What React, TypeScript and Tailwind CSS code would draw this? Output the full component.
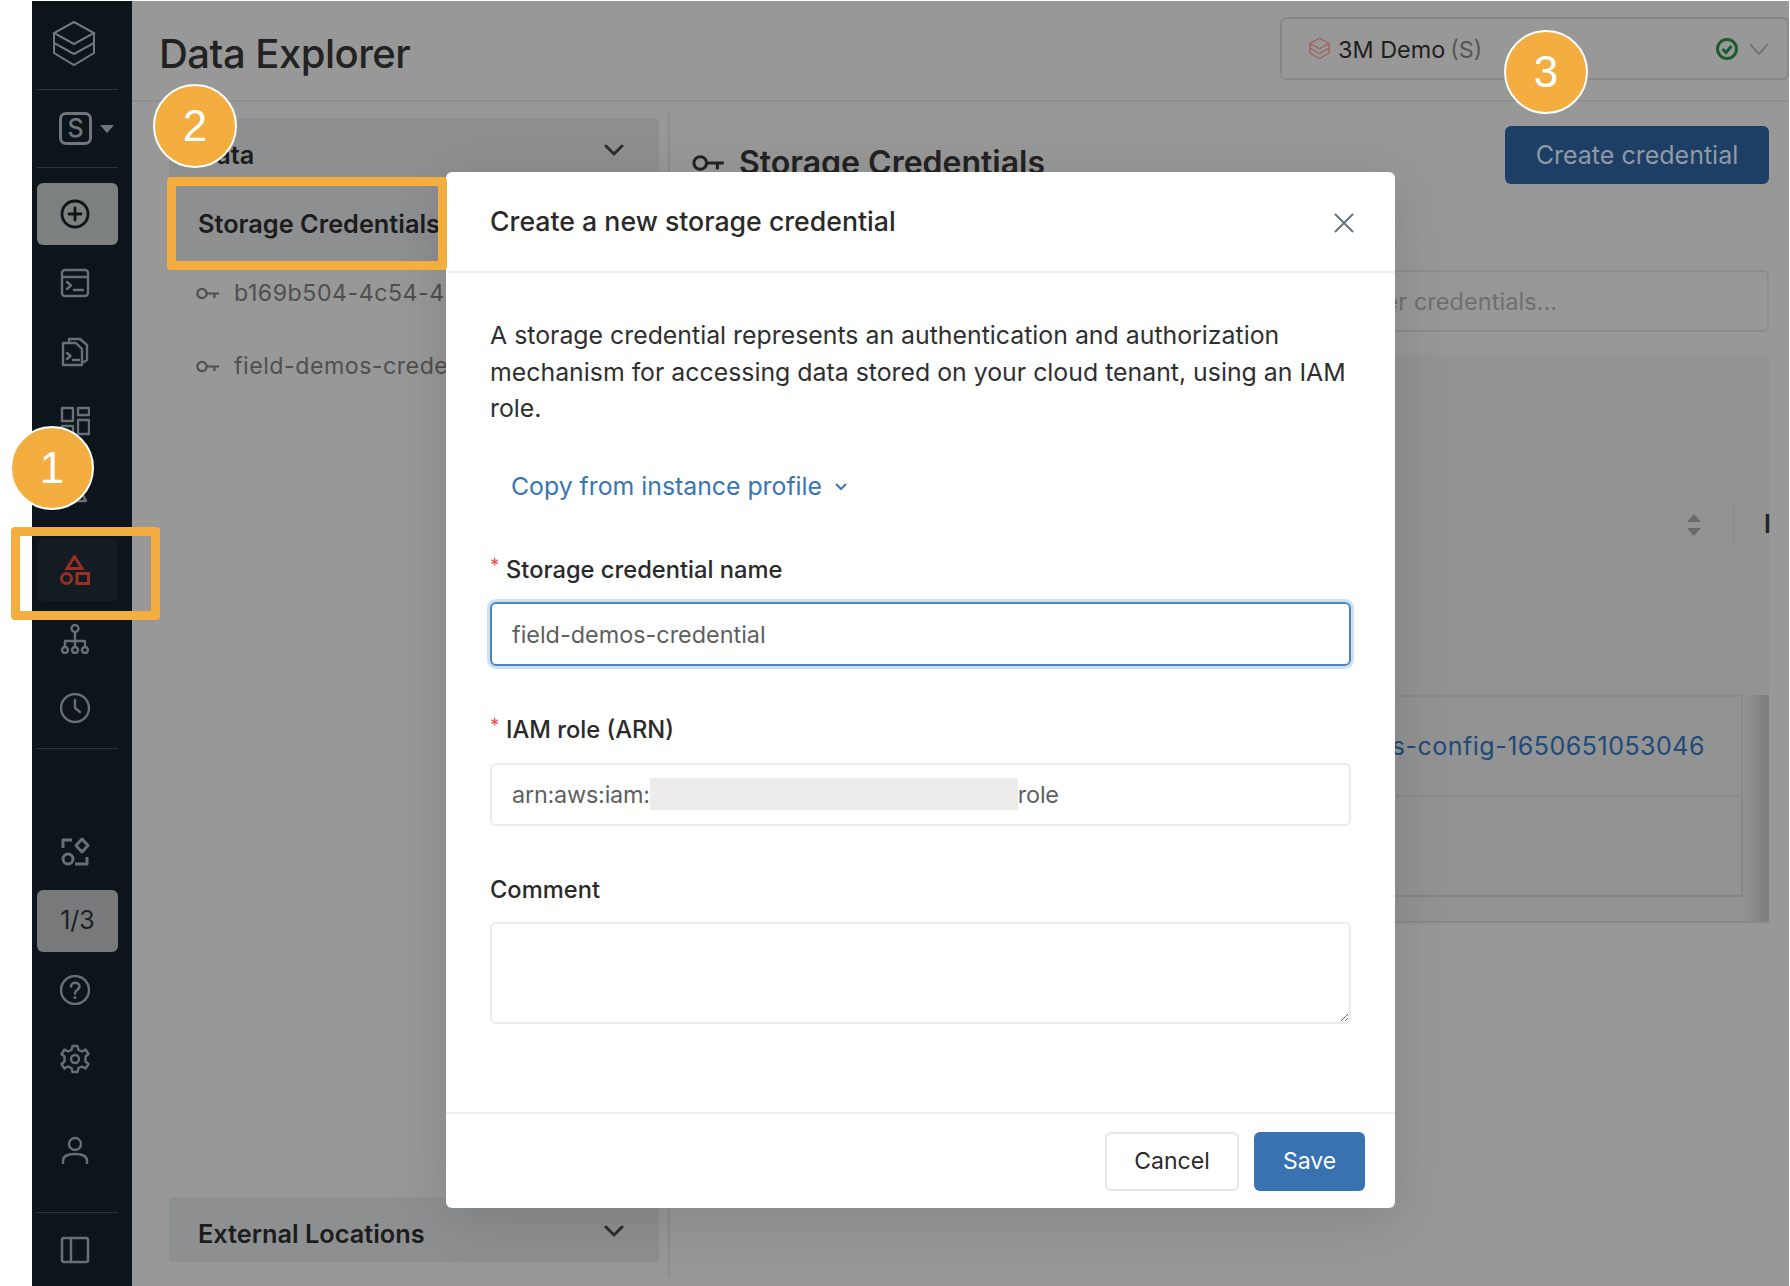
import { ReactNode } from 'react';

const stroke = { fill: 'none', stroke: 'currentColor', strokeWidth: 2.4, strokeLinecap: 'round', strokeLinejoin: 'round' } as const;

function Logo({ className }: { className?: string }) {
  return (
    <svg viewBox="0 0 44 47" className={className} fill="none" stroke="currentColor" strokeWidth="2" strokeLinejoin="miter">
      <path d="M22 2 L42 13 L22 24 L2 13 Z" />
      <path d="M2 14 V23 L22 34 L42 23 V14" />
      <path d="M2 24 V33 L22 45 L42 33 V24" />
    </svg>
  );
}

function KeyIcon({ className }: { className?: string }) {
  return (
    <svg viewBox="0 0 26 14" className={className} {...stroke} strokeLinecap="butt">
      <circle cx="6.5" cy="7" r="5" />
      <path d="M11.5 7 H25 M20 7 V12" />
    </svg>
  );
}

function Chevron({ className }: { className?: string }) {
  return (
    <svg viewBox="0 0 20 12" className={className} {...stroke} strokeWidth={3}>
      <path d="M2 2 L10 10 L18 2" />
    </svg>
  );
}

function NavIcon({ children, className }: { children: ReactNode; className?: string }) {
  return (
    <div className={`h-[62px] flex items-center justify-center pr-[5px] rounded-md ${className ?? 'text-[#696f73]'}`}>
      <svg viewBox="0 0 30 30" className="w-[30px] h-[30px]" {...stroke}>
        {children}
      </svg>
    </div>
  );
}

function Circle({ n, className }: { n: number; className: string }) {
  return (
    <div className={`absolute w-[84px] h-[84px] rounded-full bg-[#f4ad3f] border-2 border-white flex items-center justify-center text-white text-[44px] [font-family:'Liberation_Sans',sans-serif] ${className}`}>
      {n}
    </div>
  );
}

export default function App() {
  return (
    <div className="relative w-[1790px] h-[1286px] bg-white pl-[32px] pr-px pt-px flex overflow-hidden [font-family:Inter,sans-serif]">
      {/* sidebar */}
      <aside className="w-[100px] h-full bg-[#0b151b] pl-[5px] pr-[14px] flex flex-col shrink-0">
        <div className="h-[88px] flex items-center justify-center pr-[7px] pb-[4px] text-[#72787b]">
          <Logo className="w-[44px] h-[47px]" />
        </div>
        <div className="h-px bg-[#2c3438]" />
        <div className="h-[77px] flex items-center gap-[8px] pl-[22px] text-[#70767a]">
          <div className="w-[33px] h-[33px] border-[3px] border-[#70767a] rounded-[7px] flex items-center justify-center text-[25px] font-medium">S</div>
          <div className="w-0 h-0 border-x-[7px] border-x-transparent border-t-[8px] border-t-[#70767a]" />
        </div>
        <div className="h-px bg-[#2c3438]" />
        <div className="mt-[15px] flex flex-col gap-[7px]">
          <NavIcon className="bg-[#7c807f] text-[#0d1518]">
            <circle cx="15" cy="15" r="13" strokeWidth="2.8" />
            <path d="M15 9 V21 M9 15 H21" strokeWidth="2.8" />
          </NavIcon>
          <NavIcon>
            <rect x="2" y="2" width="26" height="26" rx="3" />
            <path d="M2 9 H28 M7 14 L11 17.5 L7 21 M14 22 H23" />
          </NavIcon>
          <NavIcon>
            <path d="M9 4 V2 H20 L27 8 V23 L24 25" />
            <path d="M3 6 H16 L22 12 V28 H3 Z" />
            <path d="M7 16 L10.5 19 L7 22 M13 23 H19" />
          </NavIcon>
          <NavIcon>
            <rect x="2" y="2" width="11" height="13" />
            <rect x="18" y="2" width="11" height="7" />
            <rect x="2" y="20" width="11" height="8" />
            <rect x="18" y="14" width="11" height="14" />
          </NavIcon>
          <NavIcon>
            <path d="M15 4 L26 26 H4 Z" />
          </NavIcon>
        </div>
        <div className="mt-[18px] flex flex-col gap-[7px]">
          <NavIcon className="bg-[#121c22] text-[#9a2f24]">
            <path d="M14.5 1.5 L22 13.5 H7 Z" strokeWidth="3" strokeLinejoin="miter" />
            <circle cx="6.5" cy="23.5" r="5" strokeWidth="3" />
            <rect x="17" y="18.5" width="11.5" height="10" strokeWidth="3" strokeLinejoin="miter" />
          </NavIcon>
          <NavIcon>
            <circle cx="15" cy="4.5" r="3.5" />
            <path d="M15 8 V17 M5 23 V17 H25 V23 M15 17 V23" />
            <circle cx="5" cy="26" r="3" />
            <circle cx="15" cy="26" r="3" />
            <circle cx="25" cy="26" r="3" />
          </NavIcon>
          <NavIcon>
            <circle cx="15" cy="15" r="14" />
            <path d="M15 7 V15 L20 19" />
          </NavIcon>
        </div>
        <div className="mt-[9px] h-px bg-[#2c3438]" />
        <div className="mt-[72px] flex flex-col gap-[7px]">
          <NavIcon>
            <path d="M3 11 V3 H12 M27 20 V27 H15" strokeWidth="3" strokeLinecap="butt" />
            <path d="M22 2 L28 8.5 L22 15 L16 8.5 Z" strokeWidth="3" />
            <circle cx="8" cy="22" r="5" strokeWidth="3" />
          </NavIcon>
          <div className="h-[62px] rounded-md bg-[#77797b] flex items-center justify-center text-[#1b2227] text-[25px]">1/3</div>
          <NavIcon>
            <circle cx="15" cy="15" r="14" strokeWidth="2.5" />
            <path d="M11 11.5 C11 6.5 19.5 6.5 19.5 11.5 C19.5 15 15 14.5 15 18.5" strokeWidth="2.5" />
            <circle cx="15" cy="22.5" r="0.6" strokeWidth="2" />
          </NavIcon>
          <NavIcon>
            <path d="M12.5 2 H17.5 L18.5 6 L22 7.5 L25.5 5.5 L28.5 10 L25.5 12.5 V17.5 L28.5 20 L25.5 24.5 L22 22.5 L18.5 24 L17.5 28 H12.5 L11.5 24 L8 22.5 L4.5 24.5 L1.5 20 L4.5 17.5 V12.5 L1.5 10 L4.5 5.5 L8 7.5 L11.5 6 Z" />
            <circle cx="15" cy="15" r="4" />
          </NavIcon>
        </div>
        <div className="mt-[30px]">
          <NavIcon>
            <circle cx="15" cy="8" r="6" />
            <path d="M3 28 V25 C3 20 8 18 15 18 C22 18 27 20 27 25 V28" strokeLinecap="butt" />
          </NavIcon>
        </div>
        <div className="mt-[30px] h-px bg-[#2c3438]" />
        <div className="flex-1 flex items-center justify-center pr-[5px] text-[#696f73]">
          <svg viewBox="0 0 30 30" className="w-[30px] h-[30px]" {...stroke} strokeWidth={2.5}>
            <rect x="2" y="3" width="26" height="24" rx="2" />
            <path d="M11 3 V27" />
          </svg>
        </div>
      </aside>

      {/* page behind the dialog */}
      <main className="flex-1 bg-[#989898] flex flex-col min-w-0">
        <header className="h-[101px] border-b-2 border-[#8e8e8e] flex items-start justify-between pl-[27px] shrink-0">
          <h1 className="mt-[29px] text-[40px] leading-[48px] font-medium text-[#222] tracking-[-0.5px]">Data Explorer</h1>
          <div className="mt-[16px] w-[509px] h-[63px] border-2 border-[#878787] rounded-md flex items-center pl-[27px] pr-[18px]">
            <Logo className="w-[21px] h-[23px] text-[#a4493a]" />
            <span className="ml-[8px] pt-[3px] text-[23.4px] text-[#1f1f1f]">3M Demo</span>
            <span className="ml-[5px] pt-[3px] text-[23.4px] text-[#565656]">(S)</span>
            <svg viewBox="0 0 24 24" className="ml-auto w-[24px] h-[24px] text-[#1c5a2c]" fill="none" stroke="currentColor" strokeWidth="3">
              <circle cx="12" cy="12" r="9.5" />
              <path d="M7.5 12 L11 15.5 L16.5 9" />
            </svg>
            <svg viewBox="0 0 20 12" className="ml-[10px] w-[20px] h-[12px] text-[#6f6f6f]" fill="none" stroke="currentColor" strokeWidth="1.8">
              <path d="M1 1 L10 11 L19 1" />
            </svg>
          </div>
        </header>

        <div className="flex-1 flex min-h-0">
          <div className="w-[538px] shrink-0 my-[8px] pl-[37px] pr-[9px] border-r-2 border-[#8d8d8d] flex flex-col">
            <div className="mt-[8px] h-[59px] bg-[#8e8f90] rounded-t flex items-center justify-between pl-[29px] pr-[35px] text-[25.3px] font-semibold text-[#1c1c1c]">
              <span className="mt-[14px]">Data</span>
              <Chevron className="mt-[4px] w-[20px] h-[12px] text-[#2d2d2d]" />
            </div>
            <div className="h-[84px] bg-[#8e8f90] flex items-center pl-[29px] pt-[10px] text-[25.3px] font-semibold text-[#1c1c1c] whitespace-nowrap">
              Storage Credentials
            </div>
            <div className="h-[65px] flex items-center pl-[27px] text-[#4f4f4f] text-[23.2px] whitespace-nowrap">
              <KeyIcon className="w-[24px] h-[13px] shrink-0" />
              <span className="ml-[14px] tracking-[0.5px]">b169b504-4c54-4</span>
            </div>
            <div className="mt-[8px] h-[65px] flex items-center pl-[27px] text-[#4f4f4f] text-[23.2px] whitespace-nowrap">
              <KeyIcon className="w-[24px] h-[13px] shrink-0" />
              <span className="ml-[14px] tracking-[0.5px]">field-demos-credential</span>
            </div>
            <div className="mt-auto mb-[16px] h-[65px] bg-[#8e8f90] rounded flex items-center justify-between pl-[29px] pr-[35px] text-[25.3px] font-semibold text-[#1c1c1c]">
              <span className="mt-[9px]">External Locations</span>
              <Chevron className="mt-[3px] w-[20px] h-[12px] text-[#2d2d2d]" />
            </div>
          </div>

          <div className="flex-1 min-w-0 pl-[22px] pr-[20px] pt-[24px]">
            <div className="flex items-start justify-between">
              <div className="mt-[17px] flex items-center gap-[14px] text-[#222]">
                <KeyIcon className="w-[33px] h-[18px]" />
                <span className="text-[32px] leading-[40px] font-semibold">Storage Credentials</span>
              </div>
              <button className="w-[264px] h-[58px] pt-[2px] rounded-md bg-[#1d3f66] text-[#8f9aa5] text-[25px]">Create credential</button>
            </div>
            <div className="mt-[86px] h-[62px] border-2 border-[#8c8c8c] rounded-md flex items-center justify-end pt-[2px] pr-[210px] text-[23.6px] text-[#6f6f6f]">
              Filter credentials...
            </div>
            <div className="mt-[23px] h-[568px] bg-[#939393] border-b-2 border-[#888] flex flex-col">
              <div className="h-[340px] flex items-center justify-end">
                <svg viewBox="0 0 14 24" className="w-[14px] h-[24px] text-[#6a6a6a]" fill="currentColor">
                  <path d="M7 1 L14 9 H0 Z M7 23 L14 15 H0 Z" />
                </svg>
                <div className="ml-[32px] w-px h-[42px] bg-[#8a8a8a]" />
                <span className="ml-[30px] -mr-[2px] text-[25px] font-semibold text-[#222]">I</span>
              </div>
              <div className="flex-1 flex">
                <div className="flex-1 flex flex-col">
                  <div className="h-[102px] border-t-2 border-b-2 border-r-2 border-[#8b8b8b] flex items-center justify-end pt-[1px] pr-[36px] text-[25px] text-[#204a78] tracking-[0.5px]">
                    field-demos-config-1650651053046
                  </div>
                  <div className="h-[100px] border-b-2 border-r-2 border-[#868686]" />
                </div>
                <div className="w-[26px] bg-gradient-to-r from-[#939393] to-[#7c7c7c]" />
              </div>
            </div>
          </div>
        </div>
      </main>

      {/* dialog */}
      <div className="absolute left-[446px] top-[172px] w-[949px] h-[1036px] bg-white rounded-md shadow-[0_12px_60px_rgba(0,0,0,0.13)] flex flex-col">
        <div className="h-[101px] border-b-2 border-[#f0f0f0] flex items-center justify-between pl-[44px] pr-[41px] shrink-0">
          <h2 className="text-[26.7px] font-medium text-[#2a2a2a]">Create a new storage credential</h2>
          <svg viewBox="0 0 20 20" className="mt-[2px] w-[20px] h-[20px] text-[#5d7286]" fill="none" stroke="currentColor" strokeWidth="1.8">
            <path d="M1 1 L19 19 M19 1 L1 19" />
          </svg>
        </div>
        <div className="flex-1 px-[44px] pt-[44px]">
          <p className="-mr-[8px] text-[24.85px] leading-[36.5px] text-[#2f2f2f]">
            A storage credential represents an authentication and authorization mechanism for accessing data stored on your cloud tenant, using an IAM role.
          </p>
          <div className="mt-[40px] h-[40px] pl-[21px] flex items-center gap-[13px] text-[24.8px] text-[#3a75b2]">
            Copy from instance profile
            <svg viewBox="0 0 12 8" className="w-[12px] h-[8px]" fill="none" stroke="currentColor" strokeWidth="2">
              <path d="M1 1 L6 6 L11 1" />
            </svg>
          </div>
          <label className="mt-[47px] h-[32px] flex items-center text-[23.7px] font-medium text-[#2a2a2a]">
            <span className="w-[16px] -mt-[8px] text-[18px] text-[#e8554e]">*</span>
            Storage credential name
          </label>
          <input
            readOnly
            value="field-demos-credential"
            className="mt-[16px] block w-full h-[64px] border-2 border-[#4a86c5] rounded-md pl-[20px] pt-[2px] text-[23.4px] text-[#5f5f5f] outline-none shadow-[0_0_0_3px_#cfe0f0]"
          />
          <label className="mt-[48px] h-[32px] flex items-center text-[23.7px] font-medium text-[#2a2a2a]">
            <span className="w-[16px] -mt-[8px] text-[18px] text-[#e8554e]">*</span>
            IAM role (ARN)
          </label>
          <div className="mt-[17px] h-[63px] border-2 border-[#ececec] rounded-md pl-[20px] flex items-center text-[23.4px] tracking-[-0.2px] text-[#5f5f5f]">
            <span className="pt-[2px]">arn:aws:iam:</span>
            <span className="w-[368px] h-[32px] bg-[#edecea] shrink-0" />
            <span className="pt-[2px]">role</span>
          </div>
          <label className="mt-[48px] h-[32px] flex items-center text-[23.7px] font-medium text-[#2a2a2a]">Comment</label>
          <textarea
            readOnly
            className="mt-[16px] block w-full h-[102px] border-2 border-[#ececec] rounded-md outline-none resize-y"
          />
        </div>
        <div className="h-[96px] border-t-2 border-[#f0f0f0] flex items-center justify-end gap-[15px] pr-[30px] shrink-0">
          <button className="w-[134px] h-[59px] border-2 border-[#e6e6e6] rounded-md text-[23px] text-[#2a2a2a]">Cancel</button>
          <button className="w-[111px] h-[59px] bg-[#3872b0] rounded-md text-[23px] text-white">Save</button>
        </div>
      </div>

      {/* annotations */}
      <div className="absolute left-[11px] top-[527px] w-[149px] h-[93px] border-[9px] border-[#f4ad3f] rounded-sm" />
      <div className="absolute left-[167px] top-[177px] w-[280px] h-[93px] border-[9px] border-[#f4ad3f] rounded-sm" />
      <Circle n={1} className="left-[10px] top-[426px]" />
      <Circle n={2} className="left-[153px] top-[84px]" />
      <Circle n={3} className="left-[1504px] top-[30px]" />
    </div>
  );
}
